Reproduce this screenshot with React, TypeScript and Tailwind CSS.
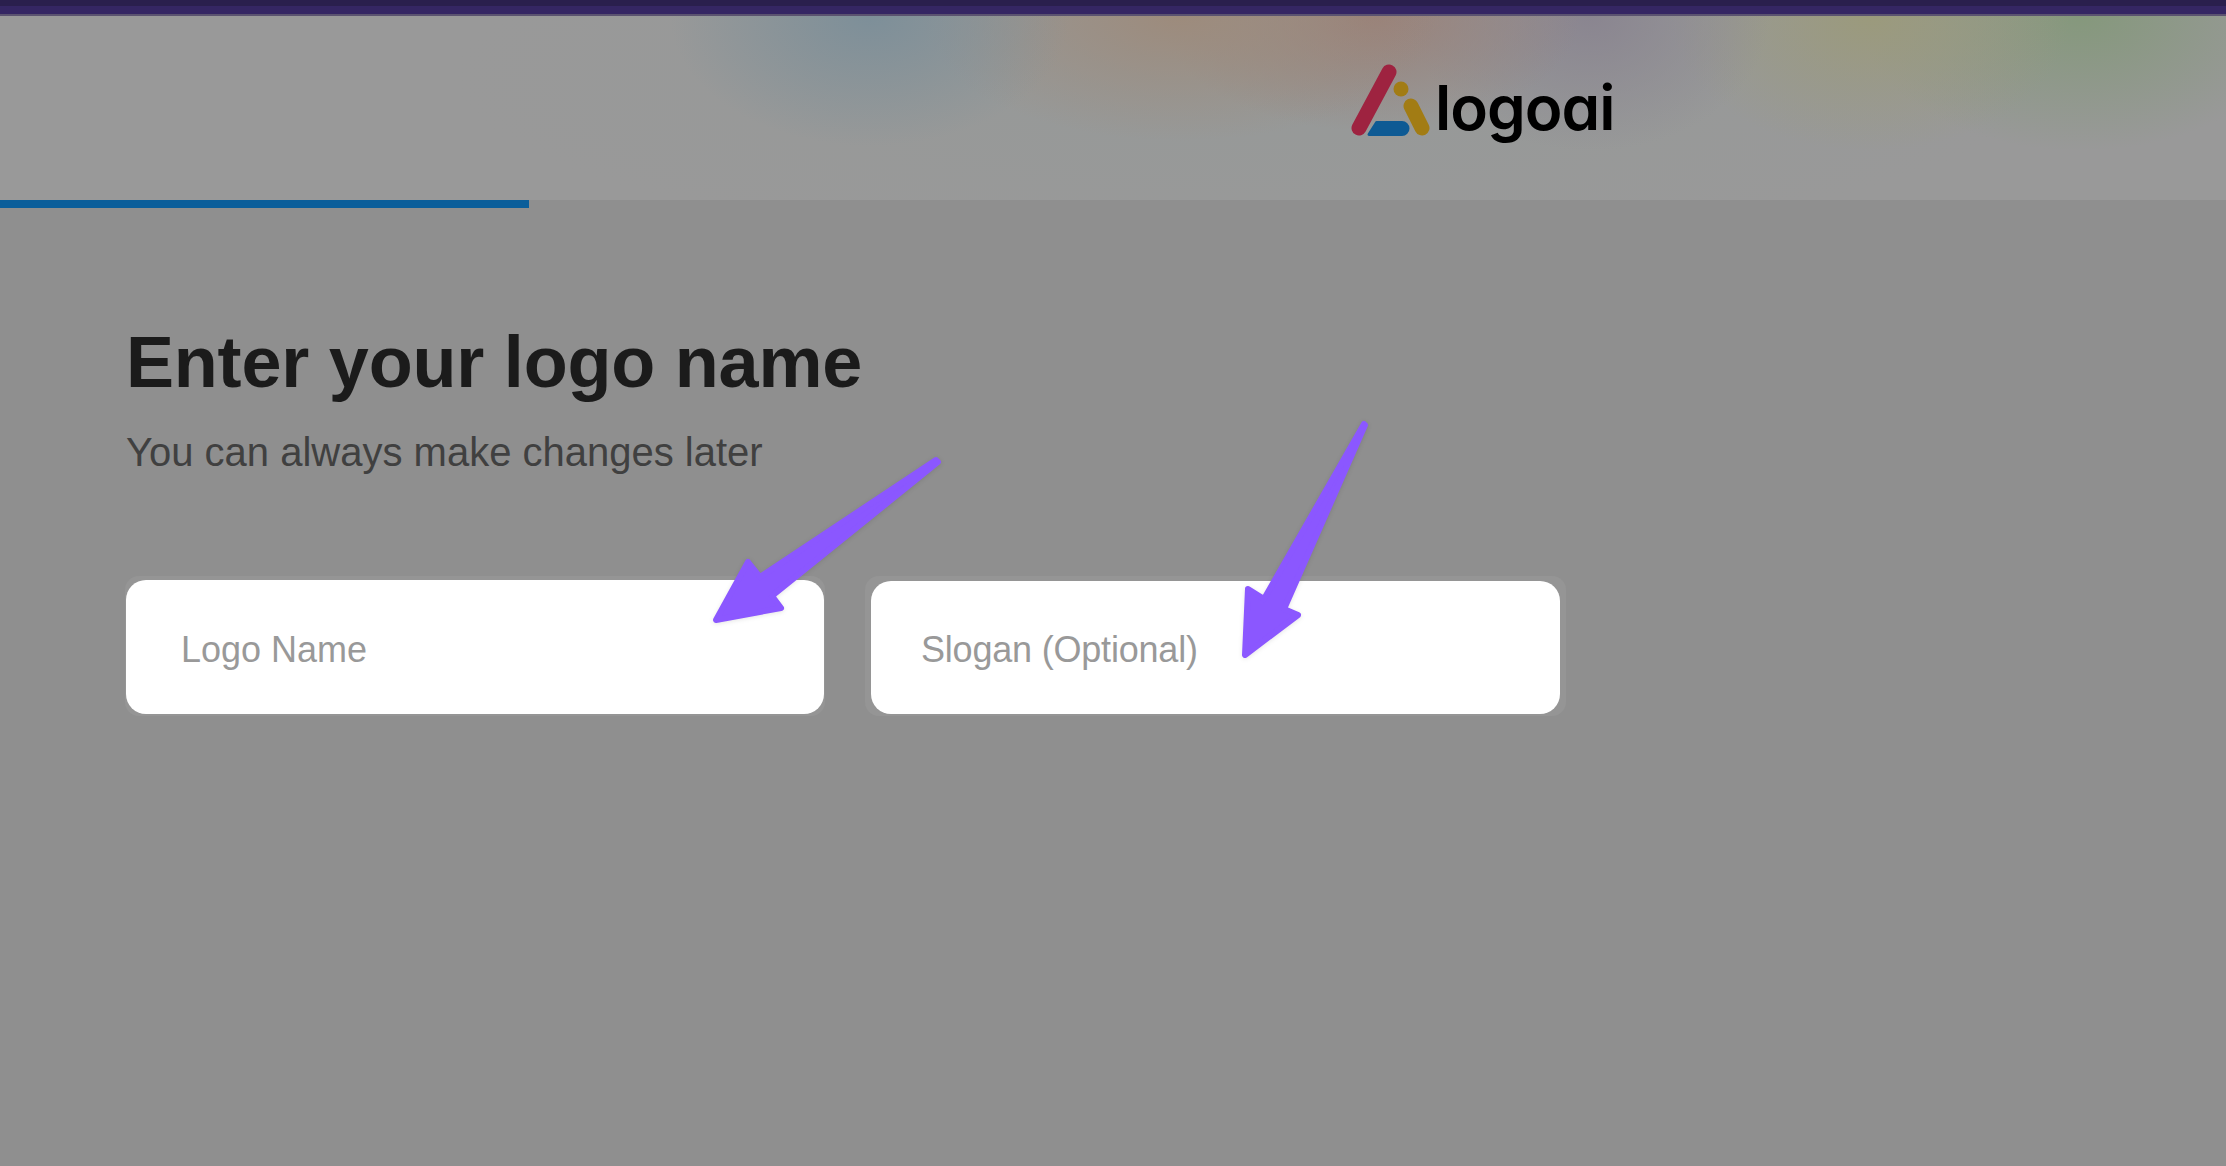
const arrowClass = "fill-[#8b57ff] stroke-[#8b57ff] stroke-[6] [stroke-linejoin:round]";

function Logo() {
  return (
    <div className="flex items-start gap-[3px]">
      <svg width="82" height="74" viewBox="0 0 82 74" fill="none" className="mt-[-1px]">
        <path d="M39 9 9 65" stroke="#9e2340" strokeWidth="15" strokeLinecap="round" />
        <circle cx="51" cy="26" r="7.5" fill="#a27c14" />
        <path d="M61 43 72 65" stroke="#a27c14" strokeWidth="15" strokeLinecap="round" />
        <path d="M27 58H52a7.5 7.5 0 0 1 0 15H19a1.5 1.5 0 0 1-1.3-2.2L25 59.200a2 2 0 0 1 2-1.200Z" fill="#0e5a94" />
      </svg>
      <span className="mt-[6px] font-['Inter',sans-serif] text-[62px] leading-[75px] font-semibold tracking-[-1px] text-black [font-feature-settings:'cv11']">
        logoai
      </span>
    </div>
  );
}

function Field({ placeholder, className }: { placeholder: string; className: string }) {
  return (
    <div className={`rounded-[14px] bg-[#959595] ${className}`}>
      <input
        type="text"
        placeholder={placeholder}
        className="w-full rounded-[20px] bg-white pt-[5px] text-[36px] text-[#333] outline-none placeholder:text-[#999]"
      />
    </div>
  );
}

export default function App() {
  return (
    <div className="relative flex h-screen w-full flex-col overflow-hidden bg-[#8f8f8f] font-['Liberation_Sans',Arial,sans-serif]">
      {/* Top stripe */}
      <div className="h-[16px] border-t-[6px] border-b-[2px] border-t-[#2a1f4d] border-b-[#5b5370] bg-[#352663]" />

      {/* Logo header with the colour wash */}
      <header className="flex h-[184px] items-start bg-[#999999] bg-[radial-gradient(ellipse_200px_130px_at_870px_0px,#7d8f99,transparent),radial-gradient(ellipse_260px_125px_at_1180px_0px,#9d8b7c,transparent),radial-gradient(ellipse_210px_115px_at_1370px_0px,#998078,transparent),radial-gradient(ellipse_180px_135px_at_1590px_0px,#8a8590,transparent),radial-gradient(ellipse_200px_135px_at_1870px_0px,#9b9a7c,transparent),radial-gradient(ellipse_220px_135px_at_2080px_0px,#85987c,transparent),radial-gradient(ellipse_800px_180px_at_1250px_60px,#969998,transparent)] pl-[1350px] pt-[48px]">
        <Logo />
      </header>

      {/* Progress */}
      <div className="h-[8px] w-[529px] bg-[#0b5e9a]" />

      <main className="flex flex-col pl-[125px] pt-[112px]">
        <h1 className="ml-px text-[72px] leading-[84px] font-bold tracking-[-0.2px] text-[#1b1b1b]">Enter your logo name</h1>
        <p className="ml-px mt-[25px] text-[40px] leading-[46px] text-[#404040]">You can always make changes later</p>

        <div className="mt-[101px] flex items-start">
          <Field placeholder="Logo Name" className="w-[700px] px-px pb-[2px] pt-[4px] [&_input]:h-[134px] [&_input]:pl-[55px]" />
          <Field placeholder="Slogan (Optional)" className="ml-[40px] w-[701px] px-[6px] pb-[2px] pt-[5px] [&_input]:h-[133px] [&_input]:pl-[50px] [&_input]:tracking-[-0.2px]" />
        </div>
      </main>

      {/* Annotation arrows */}
      <svg className="pointer-events-none absolute left-0 top-0 drop-shadow-[0_1px_2px_rgba(0,0,0,0.1)]" width="2226" height="1166">
        <polygon className={arrowClass} points="936,460 938,462 772,596 781,608 716,620 748,562 760,577" />
        <polygon className={arrowClass} points="1364,424 1365,425 1284,609 1298,615 1245,655 1248,589 1264,599" />
      </svg>
    </div>
  );
}
